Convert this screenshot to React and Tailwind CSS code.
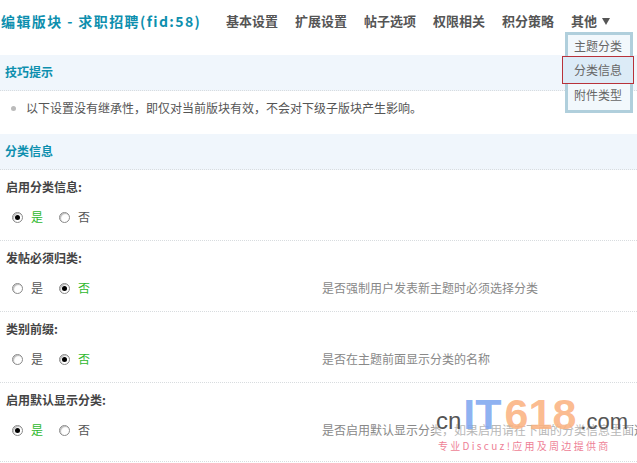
const font = { fontFamily: '"Noto Sans CJK SC", sans-serif' }

const navItems = ['基本设置', '扩展设置', '帖子选项', '权限相关', '积分策略']

function Radio({ checked, label }) {
  return (
    <span className={`flex items-center gap-[8px] w-[47px] ${checked ? 'text-[#2eb82e]' : 'text-[#555]'}`}>
      <span className="w-[11px] h-[11px] rounded-full border border-[#8a8a8a] bg-white flex items-center justify-center shadow-[inset_1px_1px_1px_#bbb]">
        {checked && <span className="w-[5px] h-[5px] rounded-full bg-black" />}
      </span>
      {label}
    </span>
  )
}

function Row({ title, value, hint, last }) {
  return (
    <div className={`${last ? 'h-[79px]' : 'h-[71px]'} px-[6px] pt-[8px] border-b border-dotted border-[#d8dcdf]`}>
      <div className="h-[18px] leading-[18px] text-[12px] font-bold text-[#444]">{title}</div>
      <div className="flex mt-[12px] h-[18px] leading-[18px] text-[12px] pl-[6px]">
        <div className="flex w-[310px] shrink-0">
          <Radio checked={value} label="是" />
          <Radio checked={!value} label="否" />
        </div>
        {hint && <div className="text-[#888] whitespace-nowrap">{hint}</div>}
      </div>
    </div>
  )
}

export default function App() {
  return (
    <div className="relative w-[637px] h-[463px] overflow-hidden bg-white" style={font}>
      <div className="flex items-center h-[55px] pb-[13px]">
        <h1 className="w-[226px] pl-[1px] text-[14px] font-bold tracking-[1.4px] text-[#0d8fae] whitespace-nowrap">
          编辑版块 - 求职招聘(fid:58)
        </h1>
        <nav className="flex gap-[17px] text-[13px] font-bold text-[#555] whitespace-nowrap">
          {navItems.map(item => <span key={item}>{item}</span>)}
          <span className="flex items-center gap-[5px]">
            其他
            <svg width="8" height="7" viewBox="0 0 8 7"><path d="M0 0h8L4 7z" fill="#555" /></svg>
          </span>
        </nav>
      </div>

      <div className="h-[36px] leading-[34px] pl-[5px] bg-[#f0f6fc] border-b border-dotted border-[#d8dcdf] text-[12px] font-bold text-[#0d8fae]">
        技巧提示
      </div>
      <div className="flex items-center h-[43px] pb-[9px] pl-[11px] text-[12px] text-[#555] whitespace-nowrap">
        <span className="w-[5px] h-[5px] rounded-full bg-[#bbb] mr-[10px]" />
        <span>以下设置没有继承性，即仅对当前版块有效，不会对下级子版块产生影响。</span>
      </div>

      <div className="h-[36px] leading-[34px] pl-[5px] bg-[#f0f6fc] border-b border-dotted border-[#d8dcdf] text-[12px] font-bold text-[#0d8fae]">
        分类信息
      </div>
      <Row title="启用分类信息:" value={true} />
      <Row title="发帖必须归类:" value={false} hint="是否强制用户发表新主题时必须选择分类" />
      <Row title="类别前缀:" value={false} hint="是否在主题前面显示分类的名称" />
      <Row title="启用默认显示分类:" value={true} hint="是否启用默认显示分类，如果启用请在下面的分类信息里面选择" last />

      <div className="absolute left-[565px] top-[32px] w-[68px] h-[81px] border-[3px] border-[#b0cfdc] bg-[#f2f8fc] text-[12px] text-[#666]">
        <div className="h-[21px] leading-[22px] pl-[6px]">主题分类</div>
        <div className="h-[28px] leading-[26px] pl-[11px] -ml-[6px] w-[72px] border border-[#b8323a] bg-[#dcebf7]">分类信息</div>
        <div className="h-[24px] leading-[22px] pl-[6px]">附件类型</div>
      </div>

      <div className="absolute left-[434px] top-[391px] w-[198px] h-[69px] bg-white/40 pointer-events-none">
        <div className="flex items-baseline h-[46px] pl-[2px] whitespace-nowrap" style={{ fontFamily: '"Liberation Sans", sans-serif' }}>
          <span className="text-[24px] leading-[46px] text-[#555]">cn</span>
          <span className="text-[43px] leading-[46px] font-bold ml-[2px] text-[#7fa8f0]/90">IT</span>
          <span className="text-[43px] leading-[46px] font-bold ml-[3px] text-[#fbb382]/90">618</span>
          <span className="text-[22px] leading-[46px] ml-[4px] text-[#555]">.com</span>
        </div>
        <div className="text-[10px] leading-[14px] mt-[2px] pl-[4px] tracking-[2.3px] text-[#ee7f96] whitespace-nowrap">
          专业Discuz!应用及周边提供商
        </div>
      </div>
    </div>
  )
}
